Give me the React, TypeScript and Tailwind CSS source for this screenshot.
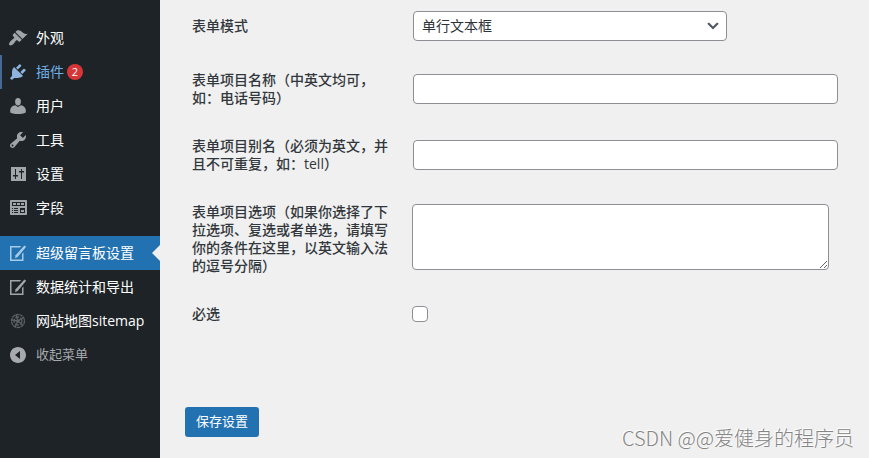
import type { ReactNode } from 'react'
import clsx from 'clsx'

const Icon = ({ children }: { children: ReactNode }) => (
  <svg className="h-5 w-5 shrink-0" viewBox="0 0 20 20" fill="currentColor" aria-hidden="true">
    {children}
  </svg>
)

const BrushIcon = () => (
  <Icon>
    <path d="M14.48 11.06L7.41 3.99l1.5-1.5c.5-.56 2.3-.47 3.51.32 1.21.8 1.43 1.28 2.91 2.1 1.18.64 2.45 1.26 4.45.85zm-.71.71L6.7 4.7 4.93 6.47c-.39.39-.39 1.02 0 1.41l1.06 1.06c.39.39.39 1.03 0 1.42-.6.6-1.43 1.11-2.21 1.69-.35.26-.7.53-1.01.84C1.43 14.23.4 16.08 1.4 17.07c.99 1 2.84-.03 4.18-1.36.31-.31.58-.66.85-1.02.57-.78 1.08-1.61 1.69-2.21.39-.39 1.02-.39 1.41 0l1.06 1.06c.39.39 1.02.39 1.41 0z" />
  </Icon>
)

const PlugIcon = () => (
  <Icon>
    <path d="M13.11 4.36L9.87 7.6 8 5.73l3.24-3.24c.35-.34 1.05-.2 1.56.32.52.51.66 1.21.31 1.55zm-8 1.77l.91-1.12 9.01 9.01-1.19.84c-.71.71-2.63 1.16-3.82 1.16H6.14L4.9 17.26c-.59.59-1.54.59-2.12 0-.59-.58-.59-1.53 0-2.12l1.24-1.24v-3.88c0-1.13.4-3.19 1.09-3.89zm7.26 3.97l3.24-3.24c.34-.35 1.04-.21 1.55.31.52.51.66 1.21.31 1.55l-3.24 3.25z" />
  </Icon>
)

const UserIcon = () => (
  <Icon>
    <ellipse cx="10" cy="5.7" rx="2.9" ry="3.7" />
    <path d="M7.2 9.3L10 11l2.8-1.7c2.9.3 5 2.4 5 5v2.2c-2.2 1.1-5 1.5-7.8 1.5s-5.6-.4-7.8-1.5v-2.2c0-2.6 2.1-4.7 5-5z" />
  </Icon>
)

const WrenchIcon = () => (
  <Icon>
    <path d="M16.68 9.77c-1.34 1.34-3.3 1.67-4.95.99l-5.41 6.52c-.99.99-2.59.99-3.58 0s-.99-2.59 0-3.57l6.52-5.42c-.68-1.65-.35-3.61.99-4.95 1.28-1.28 3.12-1.62 4.72-1.06l-2.89 2.89 2.82 2.82 2.86-2.87c.53 1.58.18 3.39-1.08 4.65zM3.81 16.21c.4.39 1.04.39 1.43 0 .4-.4.4-1.04 0-1.43-.39-.4-1.03-.4-1.43 0-.39.39-.39 1.03 0 1.43z" />
  </Icon>
)

const SlidersIcon = () => (
  <Icon>
    <path
      fillRule="evenodd"
      d="M3 3h15v14H3zM7 5v6H5v1.6h2V15h1v-2.4h2V11H8V5zm6 0v2h-2v1.6h2V15h1V8.6h2V7h-2V5z"
    />
  </Icon>
)

const FieldsIcon = () => (
  <Icon>
    <path
      fillRule="evenodd"
      d="M3 2h15c.6 0 1 .4 1 1v13c0 .6-.4 1-1 1H3c-.6 0-1-.4-1-1V3c0-.6.4-1 1-1zM4 4v4h13V4zm0 6v1h1v-1zm2 0v1h4v-1zm-2 2v1h1v-1zm2 0v1h4v-1zm-2 2v1h1v-1zm2 0v1h4v-1zm6-4v5h5v-5z"
    />
    <path d="M5 5h3v2H5zM9 5h3v2H9zM13 5h3v2h-3zM13 12h3v2h-3z" />
  </Icon>
)

const EditIcon = () => (
  <Icon>
    <path d="M15.5 9.5V18H2V3h11l-1 1.5H3.5v12H14V11z" />
    <path d="M16.4 2.4l1.8 1.4-8.5 10.1-2.7 1.3.6-2.9z" />
  </Icon>
)

const SitemapIcon = () => (
  <Icon>
    <g fill="none" stroke="currentColor" strokeWidth="1.3">
      <circle cx="10" cy="10" r="6.5" strokeDasharray="3.4 .5" />
      <circle cx="10" cy="10" r="4" strokeDasharray="4 1.2" />
      <path d="M10 10L8 3.7M10 10l5.5-3.5M10 10l5 4.5M10 10l-3 6M10 10l-6-1" />
    </g>
    <circle cx="10" cy="10" r="1.8" />
  </Icon>
)

const CollapseIcon = () => (
  <Icon>
    <path
      fillRule="evenodd"
      d="M10 2c4.42 0 8 3.58 8 8s-3.58 8-8 8-8-3.58-8-8 3.58-8 8-8zm2 12V6l-5 4z"
    />
  </Icon>
)

interface MenuItem {
  label: string
  icon: ReactNode
  badge?: number
  hovered?: boolean
  current?: boolean
  faded?: boolean
}

const contentMenu: MenuItem[] = [
  { label: '外观', icon: <BrushIcon /> },
  { label: '插件', icon: <PlugIcon />, badge: 2, hovered: true },
  { label: '用户', icon: <UserIcon /> },
  { label: '工具', icon: <WrenchIcon /> },
  { label: '设置', icon: <SlidersIcon /> },
  { label: '字段', icon: <FieldsIcon /> },
]

const pluginMenu: MenuItem[] = [
  { label: '超级留言板设置', icon: <EditIcon />, current: true },
  { label: '数据统计和导出', icon: <EditIcon /> },
  { label: '网站地图sitemap', icon: <SitemapIcon />, faded: true },
]

function MenuLink({ item }: { item: MenuItem }) {
  const { label, icon, badge, hovered, current, faded } = item
  return (
    <li>
      <a
        href="#"
        aria-current={current ? 'page' : undefined}
        className={clsx(
          'relative flex h-[34px] items-center gap-2 border-l-2 pl-[6px] text-sm',
          current && 'border-[#2271b1] bg-[#2271b1] text-white',
          hovered && 'border-[#466993] text-[#72aee6]',
          !current && !hovered && 'border-transparent text-white'
        )}
      >
        <span
          className={clsx(
            current && 'text-[#a9cbe6]',
            hovered && 'text-[#8fb4de]',
            faded && 'text-[#5c6166]',
            !current && !hovered && !faded && 'text-[#a0a5aa]'
          )}
        >
          {icon}
        </span>
        <span className="flex items-center gap-[3px]">
          {label}
          {badge && (
            <span className="flex h-4 w-4 items-center justify-center rounded-full bg-[#d63638] text-[11px] text-white">
              {badge}
            </span>
          )}
        </span>
        {/* Notch pointing at the page content */}
        {current && (
          <span className="absolute top-[9px] right-0 border-y-8 border-r-8 border-y-transparent border-r-[#f0f0f0]" />
        )}
      </a>
    </li>
  )
}

function FormRow({ id, label, children }: { id: string; label: string; children: ReactNode }) {
  return (
    <div className="flex items-center">
      <div className="w-[220px] shrink-0 pr-[22px]">
        <label htmlFor={id} className="block text-sm leading-[18px] font-medium text-[#32373c]">
          {label}
        </label>
      </div>
      <div className="min-w-0 flex-1">{children}</div>
    </div>
  )
}

const fieldBox = 'block rounded border border-[#8c8f94] bg-white px-2 text-sm text-[#2c3338]'

export default function App() {
  return (
    <div
      lang="zh-CN"
      className="flex min-h-screen bg-[#f0f0f0] font-['Open_Sans','Noto_Sans_CJK_SC',sans-serif] text-[#3c434a]"
    >
      <nav className="w-40 shrink-0 bg-[#1d2327] pt-[21px]" aria-label="主菜单">
        <ul>
          {contentMenu.map((item) => (
            <MenuLink key={item.label} item={item} />
          ))}
        </ul>
        <ul className="mt-[11px]">
          {pluginMenu.map((item) => (
            <MenuLink key={item.label} item={item} />
          ))}
        </ul>
        <button type="button" className="flex h-[34px] w-full items-center gap-2 pl-2 text-[13px] text-[#a7aaad]">
          <CollapseIcon />
          收起菜单
        </button>
      </nav>

      <main className="relative min-w-0 flex-1">
        <form className="pt-[11px] pr-[31px] pl-8" onSubmit={(e) => e.preventDefault()}>
          <div className="flex flex-col gap-[30px]">
            <FormRow id="mode" label="表单模式">
              <div className="relative ml-px w-[314px] max-w-full">
                <select id="mode" className={clsx(fieldBox, 'h-[30px] w-full appearance-none')}>
                  <option>单行文本框</option>
                </select>
                <svg
                  className="pointer-events-none absolute top-[7px] right-[6px] h-4 w-4"
                  viewBox="0 0 20 20"
                  fill="#50575e"
                  aria-hidden="true"
                >
                  <path d="M5 5.6l5 5 5-5 2.2 1.6-7.2 7.2-7.2-7.2z" />
                </svg>
              </div>
            </FormRow>
            <FormRow id="name" label="表单项目名称（中英文均可，如：电话号码）">
              <div className="pl-px">
                <input id="name" type="text" className={clsx(fieldBox, 'h-[30px] w-full')} />
              </div>
            </FormRow>
            <FormRow id="alias" label="表单项目别名（必须为英文，并且不可重复，如：tell）">
              <div className="pl-px">
                <input id="alias" type="text" className={clsx(fieldBox, 'h-[30px] w-full')} />
              </div>
            </FormRow>
            <FormRow
              id="options"
              label="表单项目选项（如果你选择了下拉选项、复选或者单选，请填写你的条件在这里，以英文输入法的逗号分隔）"
            >
              <div className="pr-[9px] pb-1">
                <textarea id="options" className={clsx(fieldBox, 'h-[66px] w-full resize')} />
              </div>
            </FormRow>
            <FormRow id="required" label="必选">
              <input
                id="required"
                type="checkbox"
                className="block h-4 w-4 appearance-none rounded border border-[#8c8f94] bg-white"
              />
            </FormRow>
          </div>
          <button
            type="submit"
            className="mt-[84px] -ml-[7px] h-[30px] rounded-[3px] bg-[#2271b1] px-[11px] text-[13px] text-white"
          >
            保存设置
          </button>
        </form>

        <p className="absolute right-[15px] bottom-[6px] font-['Noto_Sans_CJK_SC',sans-serif] text-xl font-light text-[#858585] [text-shadow:-1px_-1px_0_#fff]">
          CSDN @@爱健身的程序员
        </p>
      </main>
    </div>
  )
}
